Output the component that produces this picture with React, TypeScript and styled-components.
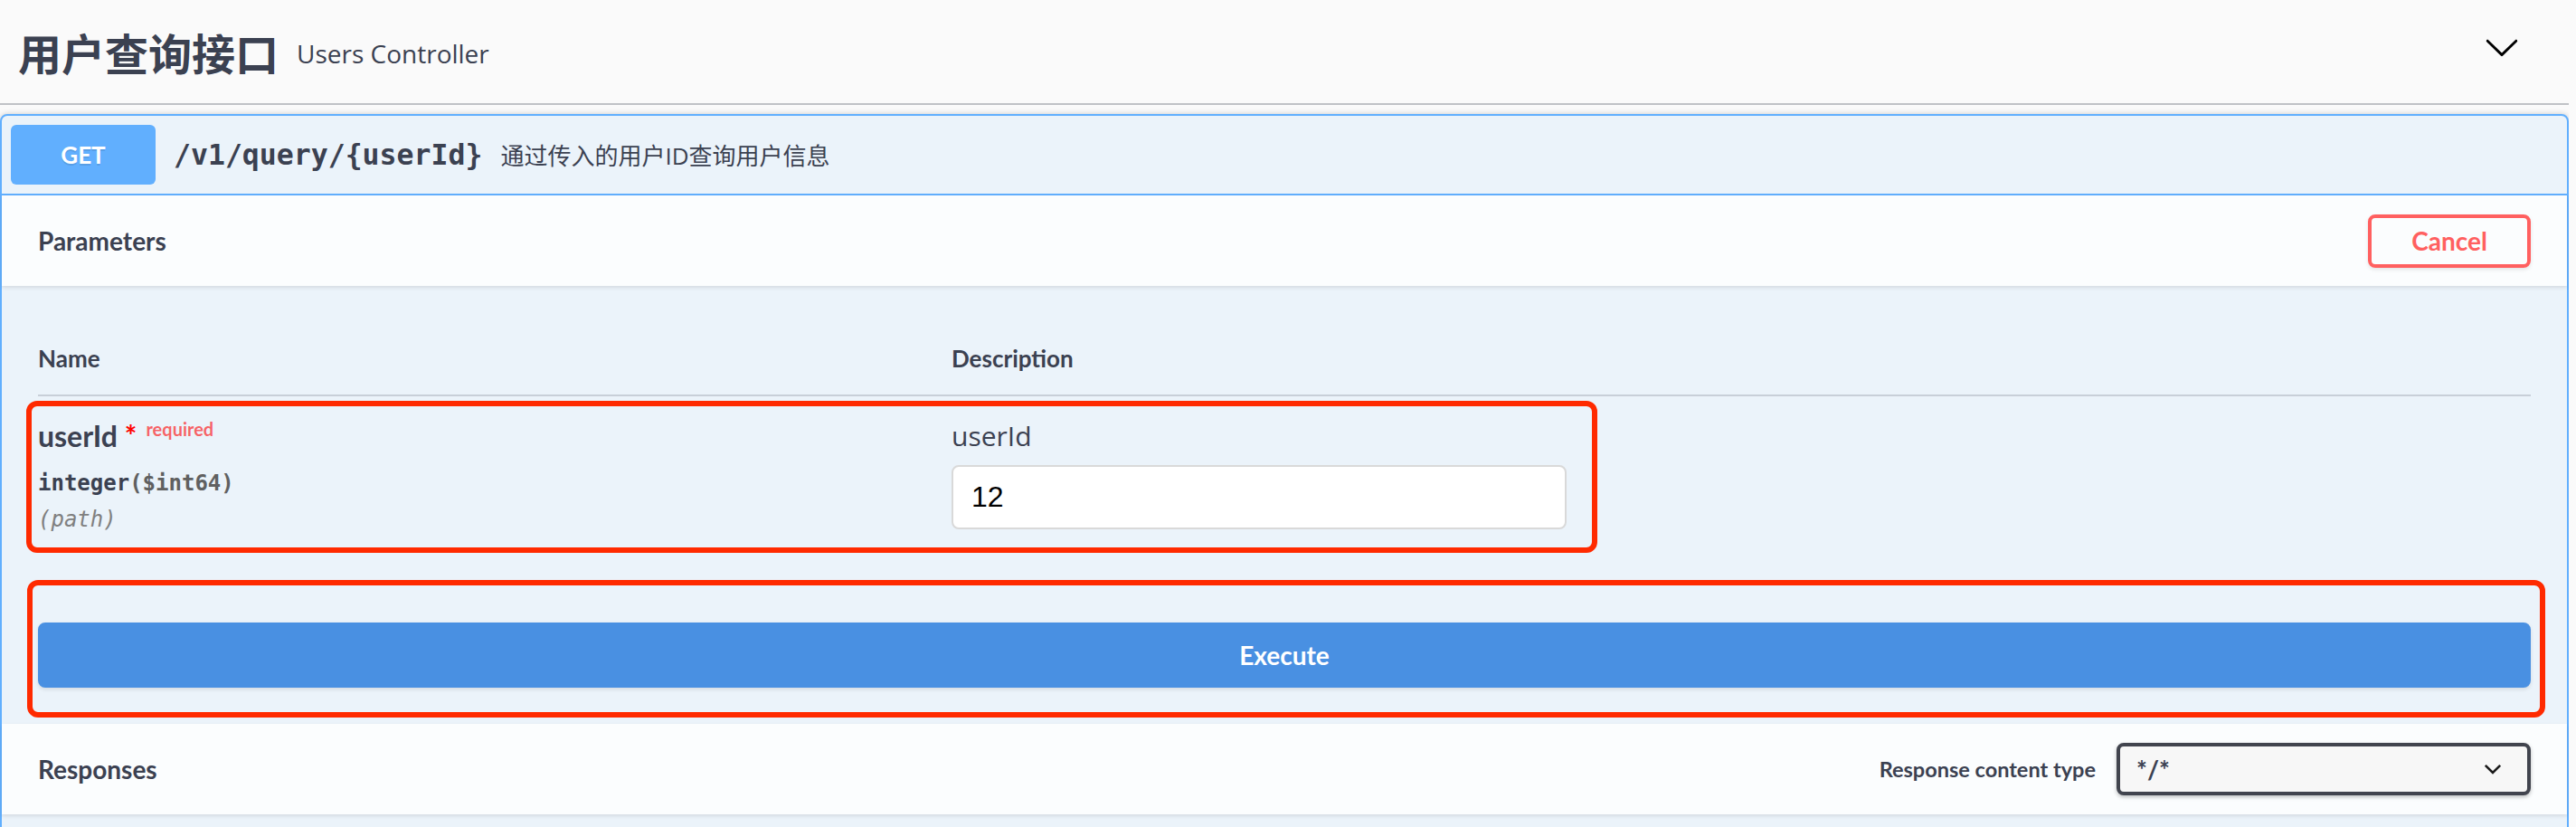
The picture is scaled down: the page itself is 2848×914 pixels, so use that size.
import React from "react";
import styled, { createGlobalStyle } from "styled-components";

const HEAD = `"Lato", "Noto Sans CJK SC", sans-serif`;
const BODY = `"Open Sans", "Noto Sans CJK SC", sans-serif`;
const MONO = `"DejaVu Sans Mono", "Liberation Mono", monospace`;
const TEXT = "#3b4151";

const GlobalStyle = createGlobalStyle`
  html, body { margin: 0; padding: 0; background: #fafafa; }
  body { font-family: ${BODY}; color: ${TEXT}; }
  *, *::before, *::after { box-sizing: border-box; }
`;

const Page = styled.div`
  width: 2840px;
  height: 914px;
  overflow: hidden;
`;

const TagHeader = styled.div`
  display: flex;
  align-items: center;
  height: 116px;
  padding: 0 40px 0 20px;
  border-bottom: 2px solid rgba(59, 65, 81, 0.3);
`;

const TagTitle = styled.h3`
  margin: 0;
  font-family: "Noto Sans CJK SC", sans-serif;
  font-weight: 700;
  font-size: 48px;
  line-height: 1;
  color: ${TEXT};
`;

const TagSubtitle = styled.small`
  flex: 1;
  padding: 4px 20px 0;
  font-family: ${BODY};
  font-size: 28px;
  color: ${TEXT};
`;

const ExpandButton = styled.button`
  display: flex;
  margin: 0 14px 11px 0;
  padding: 0;
  border: none;
  background: none;
`;

const OpBlock = styled.div`
  margin-top: 10px;
  border: 2px solid #61affe;
  border-radius: 8px;
  background: #ebf3fa;
  box-shadow: 0 0 6px rgba(0, 0, 0, 0.19);
`;

const Summary = styled.div`
  display: flex;
  align-items: center;
  padding: 10px;
  border-bottom: 2px solid #61affe;
`;

const Method = styled.span`
  display: flex;
  align-items: center;
  justify-content: center;
  min-width: 160px;
  height: 66px;
  border-radius: 6px;
  background: #61affe;
  color: #fff;
  font-family: ${HEAD};
  font-weight: 700;
  font-size: 26px;
  text-shadow: 0 2px 0 rgba(0, 0, 0, 0.1);
`;

const SummaryPath = styled.span`
  padding: 0 20px;
  font-family: ${MONO};
  font-weight: 700;
  font-size: 31.5px;
  color: ${TEXT};
`;

const SummaryDescription = styled.span`
  font-family: ${BODY};
  font-size: 26px;
  color: ${TEXT};
`;

const SectionHeader = styled.div`
  display: flex;
  align-items: center;
  min-height: 100px;
  padding: 16px 40px;
  background: rgba(255, 255, 255, 0.8);
  box-shadow: 0 2px 4px rgba(0, 0, 0, 0.1);
`;

const SectionTitle = styled.h4`
  flex: 1;
  margin: 0;
  font-family: ${HEAD};
  font-weight: 700;
  font-size: 28px;
  color: ${TEXT};
`;

const CancelButton = styled.button`
  width: 180px;
  height: 59px;
  border: 4px solid #ff6060;
  border-radius: 8px;
  background: transparent;
  color: #ff6060;
  font-family: ${HEAD};
  font-weight: 700;
  font-size: 28px;
  box-shadow: 0 2px 4px rgba(0, 0, 0, 0.1);
`;

const TableContainer = styled.div`
  padding: 40px;
`;

const TableGrid = styled.div`
  display: grid;
  grid-template-columns: 1010px 1fr;
`;

const TableHead = styled(TableGrid)`
  border-bottom: 2px solid rgba(59, 65, 81, 0.2);
`;

const HeadCell = styled.div`
  padding: 24px 0;
  font-family: ${HEAD};
  font-weight: 700;
  font-size: 26px;
  line-height: 32px;
  color: ${TEXT};
`;

const ParamRow = styled(TableGrid)`
  position: relative;
  padding: 20px 0 18px;
`;

const Cell = styled.div`
  display: flex;
  flex-direction: column;
  align-items: flex-start;
`;

const ParamName = styled.div`
  height: 48px;
  line-height: 48px;
  font-family: ${HEAD};
  font-weight: 700;
  font-size: 32px;
  color: ${TEXT};
  white-space: nowrap;
`;

const Asterisk = styled.span`
  color: red;
`;

const Required = styled.span`
  position: relative;
  top: -12px;
  padding: 0 10px;
  font-size: 20px;
  color: rgba(255, 0, 0, 0.6);
`;

const ParamType = styled.div`
  padding-top: 12px;
  line-height: 32px;
  font-family: ${MONO};
  font-weight: 700;
  font-size: 24px;
  color: ${TEXT};
`;

const PropFormat = styled.span`
  color: #606060;
`;

const ParamIn = styled.div`
  padding-top: 8px;
  line-height: 32px;
  font-family: ${MONO};
  font-style: italic;
  font-size: 24px;
  color: #808080;
`;

const DescLabel = styled.div`
  height: 48px;
  line-height: 48px;
  font-family: ${BODY};
  font-size: 30px;
  color: ${TEXT};
`;

const ValueInput = styled.input`
  margin-top: 8px;
  width: 680px;
  height: 71px;
  padding: 0 20px;
  border: 2px solid #d9d9d9;
  border-radius: 8px;
  background: #fff;
  font-family: "Liberation Sans", Arial, sans-serif;
  font-size: 32px;
  color: #000;
  outline: none;
`;

const Annotation = styled.div<{ $left: number; $top: number; $width?: number; $height?: number; $right?: number; $bottom?: number }>`
  position: absolute;
  left: ${(p) => p.$left}px;
  top: ${(p) => p.$top}px;
  ${(p) => (p.$width !== undefined ? `width: ${p.$width}px;` : "")}
  ${(p) => (p.$height !== undefined ? `height: ${p.$height}px;` : "")}
  ${(p) => (p.$right !== undefined ? `right: ${p.$right}px;` : "")}
  ${(p) => (p.$bottom !== undefined ? `bottom: ${p.$bottom}px;` : "")}
  border: 6px solid #ff2a00;
  border-radius: 12px;
  pointer-events: none;
`;

const ExecuteWrapper = styled.div`
  position: relative;
  padding: 40px;
`;

const ExecuteButton = styled.button`
  display: block;
  width: 100%;
  height: 72px;
  border: 4px solid #4990e2;
  border-radius: 8px;
  background: #4990e2;
  color: #fff;
  font-family: ${HEAD};
  font-weight: 700;
  font-size: 28px;
  box-shadow: 0 2px 4px rgba(0, 0, 0, 0.1);
`;

const MediaLabel = styled.span`
  margin-right: 23px;
  font-family: ${HEAD};
  font-weight: 700;
  font-size: 23.5px;
  color: ${TEXT};
`;

const MediaSelect = styled.div`
  display: flex;
  align-items: center;
  justify-content: space-between;
  width: 458px;
  height: 58px;
  padding: 0 28px 0 18px;
  border: 4px solid #41444e;
  border-radius: 8px;
  background: #f7f7f7;
  box-shadow: 0 2px 4px rgba(0, 0, 0, 0.25);
  font-family: ${HEAD};
  font-weight: 700;
  font-size: 28px;
  color: ${TEXT};
`;

const ResponsesBody = styled.div`
  height: 200px;
`;

const ArrowDown = ({ size }: { size: number }) => (
  <svg width={size} height={size} viewBox="0 0 20 20" aria-hidden="true">
    <path
      fill="#000"
      d="M17.418 6.109c.272-.268.709-.268.979 0s.271.701 0 .969l-7.908 7.83c-.27.268-.707.268-.979 0l-7.908-7.83c-.27-.268-.27-.701 0-.969.271-.268.709-.268.979 0L10 13.25l7.418-7.141z"
    />
  </svg>
);

const SelectChevron = () => (
  <svg width="20" height="12" viewBox="0 0 20 12" aria-hidden="true">
    <polyline points="1.8,1.8 10,10 18.2,1.8" fill="none" stroke="#1b1b1b" strokeWidth="2.6" />
  </svg>
);

export default function App() {
  return (
    <Page>
      <GlobalStyle />
      <TagHeader>
        <TagTitle>用户查询接口</TagTitle>
        <TagSubtitle>Users Controller</TagSubtitle>
        <ExpandButton>
          <ArrowDown size={40} />
        </ExpandButton>
      </TagHeader>

      <OpBlock>
        <Summary>
          <Method>GET</Method>
          <SummaryPath>/v1/query/{"{userId}"}</SummaryPath>
          <SummaryDescription>通过传入的用户ID查询用户信息</SummaryDescription>
        </Summary>

        <SectionHeader>
          <SectionTitle>Parameters</SectionTitle>
          <CancelButton>Cancel</CancelButton>
        </SectionHeader>

        <TableContainer>
          <TableHead>
            <HeadCell>Name</HeadCell>
            <HeadCell>Description</HeadCell>
          </TableHead>
          <ParamRow>
            <Cell>
              <ParamName>
                userId<Asterisk>&nbsp;*</Asterisk>
                <Required>required</Required>
              </ParamName>
              <ParamType>
                integer<PropFormat>($int64)</PropFormat>
              </ParamType>
              <ParamIn>(path)</ParamIn>
            </Cell>
            <Cell>
              <DescLabel>userId</DescLabel>
              <ValueInput readOnly value="12" />
            </Cell>
            <Annotation $left={-13} $top={5} $width={1737} $height={168} />
          </ParamRow>
        </TableContainer>

        <ExecuteWrapper>
          <ExecuteButton>Execute</ExecuteButton>
          <Annotation $left={28} $top={-7} $right={24} $bottom={7} />
        </ExecuteWrapper>

        <SectionHeader>
          <SectionTitle>Responses</SectionTitle>
          <MediaLabel>Response content type</MediaLabel>
          <MediaSelect>
            <span>*/*</span>
            <SelectChevron />
          </MediaSelect>
        </SectionHeader>
        <ResponsesBody />
      </OpBlock>
    </Page>
  );
}
